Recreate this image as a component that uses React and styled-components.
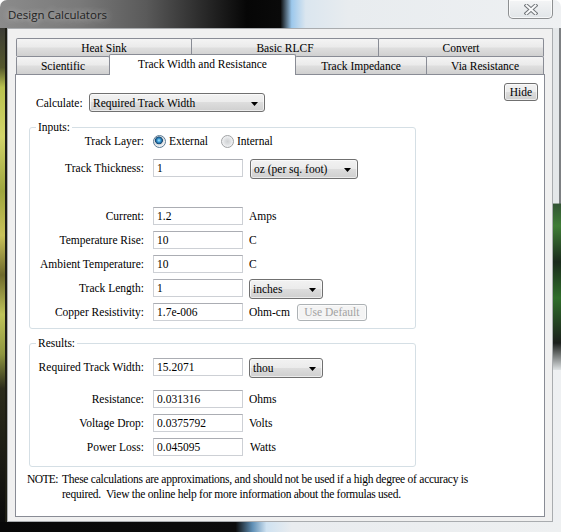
import React from 'react'
import styled, { createGlobalStyle } from 'styled-components'

const GlobalStyle = createGlobalStyle`
  html, body { margin: 0; padding: 0; background: #fff; }
  body { overflow: hidden; }
`

const serif = '"Liberation Serif", "Times New Roman", Tinos, serif'

const Window = styled.div`
  width: 561px;
  height: 532px;
  box-sizing: border-box;
  display: flex;
  flex-direction: column;
  border-radius: 7px 7px 0 0;
  overflow: hidden;
  background:
    linear-gradient(to right, #080808 0%, #0c0c0c 42%, #5f8fb5 45%, #cfe2f1 47.5%, #e9ecef 52%, #eef0f1 100%) left bottom / 100% 10px no-repeat,
    linear-gradient(to right, transparent 0, transparent 5px, #1d1d14 5px, #1d1d14 7px) left 28px / 7px calc(100% - 38px) no-repeat,
    linear-gradient(to bottom, #3c3c36 0%, #55582c 8%, #b9c24e 12%, #d2d46a 22%, #9ea63e 33%, #c9c25a 42%, #6f6a2c 50%, #bfc45a 58%, #8f9640 66%, #2c2c1c 73%, #0c0c0c 100%) left 28px / 7px calc(100% - 38px) no-repeat,
    linear-gradient(to right, #e4e7e9 0, #e4e7e9 6px, #7d8083 6px) right 28px / 8px 33% no-repeat,
    linear-gradient(to bottom, #2b3a33 0%, #3f7d36 20%, #1a2a1c 40%, #2f6e2a 60%, #1b1f1c 85%, #dfe3e5 100%) right 190px / 8px 180px no-repeat,
    linear-gradient(to right, #8b8b8b 0%, #7a7a7a 14%, #5a5a5a 26%, #262626 37%, #060606 44%, #0a0a0a 50%, #9cc8ec 52%, #dbe6ef 54.5%, #e8ecef 62%, #eef0f2 100%);
`

const TitleBar = styled.div`
  flex: 0 0 28px;
  display: flex;
  align-items: flex-start;
  justify-content: space-between;
`

const Title = styled.span`
  margin: 7px 0 0 8px;
  font-family: "Open Sans", "Noto Sans", sans-serif;
  font-size: 11.5px;
  color: #1f1f1f;
  text-shadow: 0 0 6px rgba(255, 255, 255, 0.55), 0 0 12px rgba(255, 255, 255, 0.35);
`

const CloseButton = styled.div`
  width: 45px;
  height: 19px;
  margin-right: 8px;
  box-sizing: border-box;
  border: 1px solid #8d8f91;
  border-top: none;
  border-radius: 0 0 5px 5px;
  background: linear-gradient(#f4f5f6, #e1e5e8);
  box-shadow: inset 0 0 0 1px rgba(255, 255, 255, 0.7);
  display: flex;
  align-items: center;
  justify-content: center;
`

const Client = styled.div`
  flex: 1;
  margin: 0 8px 10px 7px;
  border: 1px solid #a9acaf;
  background: #f0f0f0;
  padding: 9px 7px 4px 7px;
  display: flex;
  flex-direction: column;
  font-family: ${serif};
  font-size: 11.5px;
  color: #000;
`

const TabRow = styled.div`
  display: flex;
  height: 18px;
  padding-left: 1px;
`

const Tab = styled.div`
  box-sizing: border-box;
  flex: 0 0 ${p => p.$w}px;
  height: ${p => (p.$active ? 21 : 18)}px;
  margin-top: ${p => (p.$active ? -2 : 0)}px;
  margin-left: -1px;
  border: 1px solid #898c95;
  border-bottom: none;
  border-radius: 2px 2px 0 0;
  background: ${p => (p.$active
    ? '#fff'
    : 'linear-gradient(#f4f4f4 0%, #ebebeb 45%, #dedede 55%, #d0d0d0 100%)')};
  position: relative;
  z-index: ${p => (p.$active ? 1 : 0)};
  display: flex;
  align-items: ${p => (p.$active ? 'flex-start' : 'center')};
  padding-top: ${p => (p.$active ? 3 : 0)}px;
  justify-content: center;
  white-space: nowrap;
  &:first-child { margin-left: 0; }
`

const Panel = styled.div`
  flex: 1;
  background: #fff;
  border: 1px solid #898c95;
  display: flex;
  flex-direction: column;
`

const TopRow = styled.div`
  display: flex;
  justify-content: space-between;
  align-items: flex-start;
  padding: 8px 6px 0 20px;
`

const CalcRow = styled.div`
  display: flex;
  align-items: center;
  margin-top: 10px;
`

const CalcLabel = styled.span`
  width: 53px;
`

const Combo = styled.div`
  box-sizing: border-box;
  width: ${p => p.$w}px;
  height: ${p => p.$h || 20}px;
  margin-left: ${p => p.$ml || 0}px;
  border: 1px solid #707070;
  border-radius: 3px;
  background: linear-gradient(#f2f2f2 0%, #ebebeb 50%, #dddddd 50%, #cfcfcf 100%);
  box-shadow: inset 0 0 0 1px rgba(255, 255, 255, 0.6);
  display: flex;
  align-items: center;
  justify-content: space-between;
  padding: 0 6px 0 3px;
  white-space: nowrap;
`

const Button = styled.div`
  box-sizing: border-box;
  width: ${p => p.$w}px;
  height: ${p => p.$h || 18}px;
  margin-left: ${p => p.$ml || 0}px;
  border: 1px solid ${p => (p.$disabled ? '#adb2b5' : '#707070')};
  border-radius: 3px;
  background: ${p => (p.$disabled
    ? '#f4f4f4'
    : 'linear-gradient(#f2f2f2 0%, #ebebeb 50%, #dddddd 50%, #cfcfcf 100%)')};
  box-shadow: inset 0 0 0 1px rgba(255, 255, 255, 0.6);
  color: ${p => (p.$disabled ? '#a2a2a2' : '#000')};
  display: flex;
  align-items: center;
  justify-content: center;
  white-space: nowrap;
`

const Group = styled.fieldset`
  box-sizing: border-box;
  width: 387px;
  min-inline-size: 0;
  margin: ${p => p.$mt}px 0 0 13px;
  padding: 0 0 ${p => p.$pb}px 0;
  border: 1px solid #d5dfe5;
  border-radius: 3px;
`

const Legend = styled.legend`
  margin-left: 6px;
  padding: 0 2px;
  line-height: 10px;
`

const Row = styled.div`
  display: flex;
  align-items: ${p => (p.$center ? 'center' : 'flex-start')};
  height: 18px;
  margin-top: ${p => p.$mt || 0}px;
`

const Label = styled.div`
  flex: 0 0 114px;
  margin-right: 9px;
  text-align: right;
  line-height: 18px;
  white-space: nowrap;
`

const Field = styled.input`
  box-sizing: border-box;
  width: 90px;
  height: 18px;
  margin: 0;
  padding: 0 3px;
  border: 1px solid #cdd0d5;
  border-top-color: #abadb3;
  background: #fff;
  color: #000;
  font-family: ${serif};
  font-size: 11.5px;
  outline: none;
`

const Unit = styled.span`
  margin-left: ${p => p.$ml || 6}px;
  line-height: 18px;
  white-space: nowrap;
`

const UnitWrap = styled.div`
  display: flex;
  align-items: center;
  height: 18px;
`

const RadioOption = styled.label`
  display: flex;
  align-items: center;
  gap: 3px;
  margin-left: ${p => p.$ml || 0}px;
`

const Radio = styled.span`
  box-sizing: border-box;
  width: 13px;
  height: 13px;
  border-radius: 50%;
  border: 1px solid ${p => (p.$checked ? '#5a7a94' : '#a0a2a4')};
  background: ${p => (p.$checked
    ? 'radial-gradient(circle at 45% 40%, #b8ecff 0, #46a8e0 1.5px, #1d5f94 3px, #17486f 3.6px, #d6d9dc 4.2px, #f3f4f5 6px)'
    : 'radial-gradient(circle at 50% 50%, #cfd1d3 0, #dfe1e3 3px, #f5f6f7 6px)')};
`

const Note = styled.div`
  display: flex;
  margin-top: 5px;
  padding-left: 11px;
  line-height: 15px;
`

const NoteLabel = styled.span`
  flex: 0 0 35px;
  letter-spacing: -0.6px;
  white-space: nowrap;
`

const NoteText = styled.span`
  width: 420px;
  letter-spacing: -0.25px;
`

const Arrow = () => (
  <svg width="7" height="4" viewBox="0 0 7 4" style={{ marginTop: 2 }}>
    <path d="M0 0h7L3.5 4z" fill="#000" />
  </svg>
)

const CloseGlyph = () => (
  <svg width="14" height="11" viewBox="0 0 14 11">
    <path d="M2.5 1.5 L11.5 9.5 M11.5 1.5 L2.5 9.5" stroke="#74787c" strokeWidth="4" strokeLinecap="square" />
    <path d="M2.5 1.5 L11.5 9.5 M11.5 1.5 L2.5 9.5" stroke="#f8f9fa" strokeWidth="2" strokeLinecap="square" />
  </svg>
)

const InputRow = ({ label, value, mt, children }) => (
  <Row $mt={mt}>
    <Label>{label}</Label>
    <Field readOnly value={value} />
    {children}
  </Row>
)

export default function App() {
  return (
    <>
      <GlobalStyle />
      <Window>
        <TitleBar>
          <Title>Design Calculators</Title>
          <CloseButton><CloseGlyph /></CloseButton>
        </TitleBar>
        <Client>
          <TabRow>
            <Tab $w={176}>Heat Sink</Tab>
            <Tab $w={188}>Basic RLCF</Tab>
            <Tab $w={166}>Convert</Tab>
          </TabRow>
          <TabRow>
            <Tab $w={94}>Scientific</Tab>
            <Tab $w={187} $active>Track Width and Resistance</Tab>
            <Tab $w={132}>Track Impedance</Tab>
            <Tab $w={118}>Via Resistance</Tab>
          </TabRow>
          <Panel>
            <TopRow>
              <CalcRow>
                <CalcLabel>Calculate:</CalcLabel>
                <Combo $w={176} $h={19}><span>Required Track Width</span><Arrow /></Combo>
              </CalcRow>
              <Button $w={34}>Hide</Button>
            </TopRow>

            <Group $mt={10} $pb={7}>
              <Legend>Inputs:</Legend>
              <Row $center>
                <Label>Track Layer:</Label>
                <RadioOption><Radio $checked />External</RadioOption>
                <RadioOption $ml={13}><Radio />Internal</RadioOption>
              </Row>
              <InputRow label="Track Thickness:" value="1" mt={9}>
                <Combo $w={108} $ml={7}><span>oz (per sq. foot)</span><Arrow /></Combo>
              </InputRow>
              <InputRow label="Current:" value="1.2" mt={30}>
                <Unit>Amps</Unit>
              </InputRow>
              <InputRow label="Temperature Rise:" value="10" mt={6}>
                <Unit>C</Unit>
              </InputRow>
              <InputRow label="Ambient Temperature:" value="10" mt={6}>
                <Unit>C</Unit>
              </InputRow>
              <InputRow label="Track Length:" value="1" mt={6}>
                <Combo $w={74} $ml={6}><span>inches</span><Arrow /></Combo>
              </InputRow>
              <InputRow label="Copper Resistivity:" value="1.7e-006" mt={6}>
                <UnitWrap>
                  <Unit>Ohm-cm</Unit>
                  <Button $w={70} $h={17} $ml={7} $disabled>Use Default</Button>
                </UnitWrap>
              </InputRow>
            </Group>

            <Group $mt={9} $pb={10}>
              <Legend>Results:</Legend>
              <InputRow label="Required Track Width:" value="15.2071" mt={10}>
                <Combo $w={74} $ml={6}><span>thou</span><Arrow /></Combo>
              </InputRow>
              <InputRow label="Resistance:" value="0.031316" mt={14}>
                <Unit>Ohms</Unit>
              </InputRow>
              <InputRow label="Voltage Drop:" value="0.0375792" mt={6}>
                <Unit>Volts</Unit>
              </InputRow>
              <InputRow label="Power Loss:" value="0.045095" mt={6}>
                <Unit $ml={7}>Watts</Unit>
              </InputRow>
            </Group>

            <Note>
              <NoteLabel>NOTE:</NoteLabel>
              <NoteText>
                These calculations are approximations, and should not be used if a high degree of accuracy is
                required.{'\u00a0'} View the online help for more information about the formulas used.
              </NoteText>
            </Note>
          </Panel>
        </Client>
      </Window>
    </>
  )
}
